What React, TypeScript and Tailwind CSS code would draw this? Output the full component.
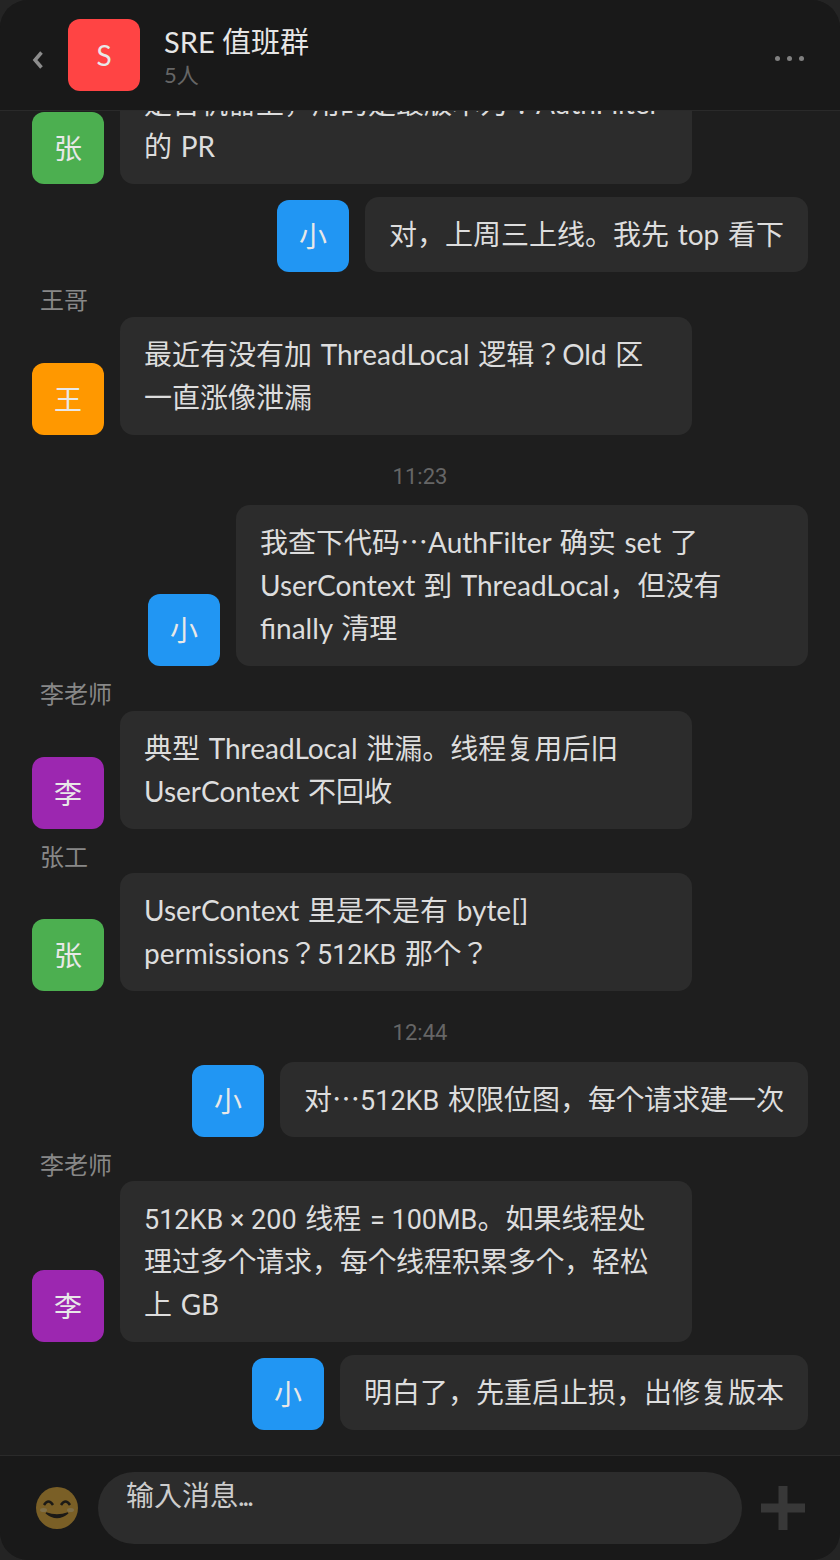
import type { ReactNode } from "react"

type Msg =
  | { kind: "time"; text: string }
  | { kind: "me"; text: ReactNode }
  | { kind: "other"; name?: string; avatar: string; color: string; text: ReactNode }

const GREEN = "bg-[#4caf50]"
const ORANGE = "bg-[#ff9800]"
const PURPLE = "bg-[#9c27b0]"

// Lato's own ellipsis sits on the baseline, the picture has the centred CJK one
const Dots = () => <span className="font-['Noto_Sans_CJK_JP'] leading-none">…</span>
// Lato's digits run too wide here
const Num = ({ children }: { children: ReactNode }) => (
  <span className="font-['Roboto'] text-[27px] leading-none [word-spacing:0px]">{children}</span>
)

const messages: Msg[] = [
  { kind: "other", avatar: "张", color: GREEN, text: "是否机器上，用的是最版本为？AuthFilter 的 PR" },
  { kind: "me", text: "对，上周三上线。我先 top 看下" },
  { kind: "other", name: "王哥", avatar: "王", color: ORANGE, text: "最近有没有加 ThreadLocal 逻辑？Old 区一直涨像泄漏" },
  { kind: "time", text: "11:23" },
  { kind: "me", text: <>我查下代码<Dots />AuthFilter 确实 set 了 UserContext 到 ThreadLocal，但没有 finally 清理</> },
  { kind: "other", name: "李老师", avatar: "李", color: PURPLE, text: "典型 ThreadLocal 泄漏。线程复用后旧 UserContext 不回收" },
  { kind: "other", name: "张工", avatar: "张", color: GREEN, text: <>UserContext 里是不是有 byte[] permissions？<Num>512KB</Num> 那个？</> },
  { kind: "time", text: "12:44" },
  { kind: "me", text: <>对<Dots /><Num>512KB</Num> 权限位图，每个请求建一次</> },
  { kind: "other", name: "李老师", avatar: "李", color: PURPLE, text: <><Num>512KB × 200</Num> 线程 <Num>= 100MB</Num>。如果线程处理过多个请求，每个线程积累多个，轻松上 GB</> },
  { kind: "me", text: "明白了，先重启止损，出修复版本" },
]

const Avatar = ({ label, color }: { label: string; color: string }) => (
  <div className={`flex h-[72px] w-[72px] shrink-0 items-center justify-center rounded-[12px] text-[28px] text-[#e8e8e8] ${color}`}>
    {label}
  </div>
)

const Bubble = ({ text }: { text: ReactNode }) => (
  <div className="max-w-[572px] rounded-[14px] bg-[#2c2c2c] px-6 py-4 text-[28px] leading-[43px] text-[#dddddd] [word-spacing:1.5px]">
    {text}
  </div>
)

const App = () => {
  return (
    <div className="h-[1560px] w-[840px] bg-[#242424] font-['Lato','Noto_Sans_CJK_JP',sans-serif]">
      <div className="flex h-full flex-col overflow-hidden rounded-[28px] bg-[#1e1e1e]">
        <header className="z-10 flex h-[111px] shrink-0 items-center border-b border-[#2a2a2a] bg-[#191919] pl-8 pr-9">
          <svg className="mr-6 mt-[10px] h-[18px] w-[12px]" viewBox="0 0 12 18" fill="none">
            <path d="M9.5 1.5 L3 9 L9.5 16.5" stroke="#8c8c8c" strokeWidth="3.5" />
          </svg>
          <Avatar label="S" color="bg-[#ff4444]" />
          <div className="ml-6 -mt-[2px] flex flex-col">
            <div className="text-[29px] leading-[42px] text-[#e6e6e6]">SRE 值班群</div>
            <div className="text-[22px] leading-[24px] text-[#666666]">5人</div>
          </div>
          <div className="ml-auto mt-[6px] flex gap-[7px]">
            <span className="h-[5px] w-[5px] rounded-full bg-[#808080]" />
            <span className="h-[5px] w-[5px] rounded-full bg-[#808080]" />
            <span className="h-[5px] w-[5px] rounded-full bg-[#808080]" />
          </div>
        </header>

        <main className="flex min-h-0 flex-1 flex-col justify-end gap-[13px] overflow-hidden px-8 pb-[25px]">
          {messages.map((m, i) => {
            if (m.kind === "time") {
              return (
                <div key={i} className="shrink-0 pt-[14px] text-center font-['Roboto'] text-[22px] leading-[30.5px] text-[#666666]">
                  {m.text}
                </div>
              )
            }
            if (m.kind === "me") {
              return (
                <div key={i} className="flex shrink-0 flex-row-reverse items-end gap-4">
                  <Bubble text={m.text} />
                  <Avatar label="小" color="bg-[#2196f3]" />
                </div>
              )
            }
            return (
              <div key={i} className="flex shrink-0 flex-col">
                {m.name && <div className="pb-[2px] pl-2 text-[24px] leading-[29.5px] text-[#888888]">{m.name}</div>}
                <div className="flex items-end gap-4">
                  <Avatar label={m.avatar} color={m.color} />
                  <Bubble text={m.text} />
                </div>
              </div>
            )
          })}
        </main>

        <footer className="flex h-[105px] shrink-0 items-center border-t border-[#2a2a2a] bg-[#191919] pl-[34px] pr-[35px]">
          <svg className="h-[44px] w-[46px] shrink-0" viewBox="0 0 46 44" fill="none">
            <circle cx="23" cy="22" r="21" fill="#7a5f26" />
            <path d="M10 19 Q14.5 12 19 19" stroke="#1c1a16" strokeWidth="2.5" />
            <path d="M27 19 Q31.5 12 36 19" stroke="#1c1a16" strokeWidth="2.5" />
            <path d="M12 27 Q23 36 34 27 Q23 31 12 27 Z" fill="#1c1a16" stroke="#1c1a16" strokeWidth="1.5" />
            <ellipse cx="9.5" cy="24" rx="3.5" ry="2" fill="#7f6f4a" />
            <ellipse cx="36.5" cy="24" rx="3.5" ry="2" fill="#7f6f4a" />
          </svg>
          <div className="ml-[18px] h-[72px] flex-1 rounded-[36px] bg-[#2c2c2c] px-7 pt-[5px] text-[28px] leading-[36px] text-[#cccccc]">
            输入消息<span className="tracking-[-2px]">...</span>
          </div>
          <svg className="ml-[19px] h-[44px] w-[44px] shrink-0" viewBox="0 0 44 44">
            <path d="M17.5 0 H26.5 V17.5 H44 V26.5 H26.5 V44 H17.5 V26.5 H0 V17.5 H17.5 Z" fill="#383838" />
          </svg>
        </footer>
      </div>
    </div>
  )
}
export default App
